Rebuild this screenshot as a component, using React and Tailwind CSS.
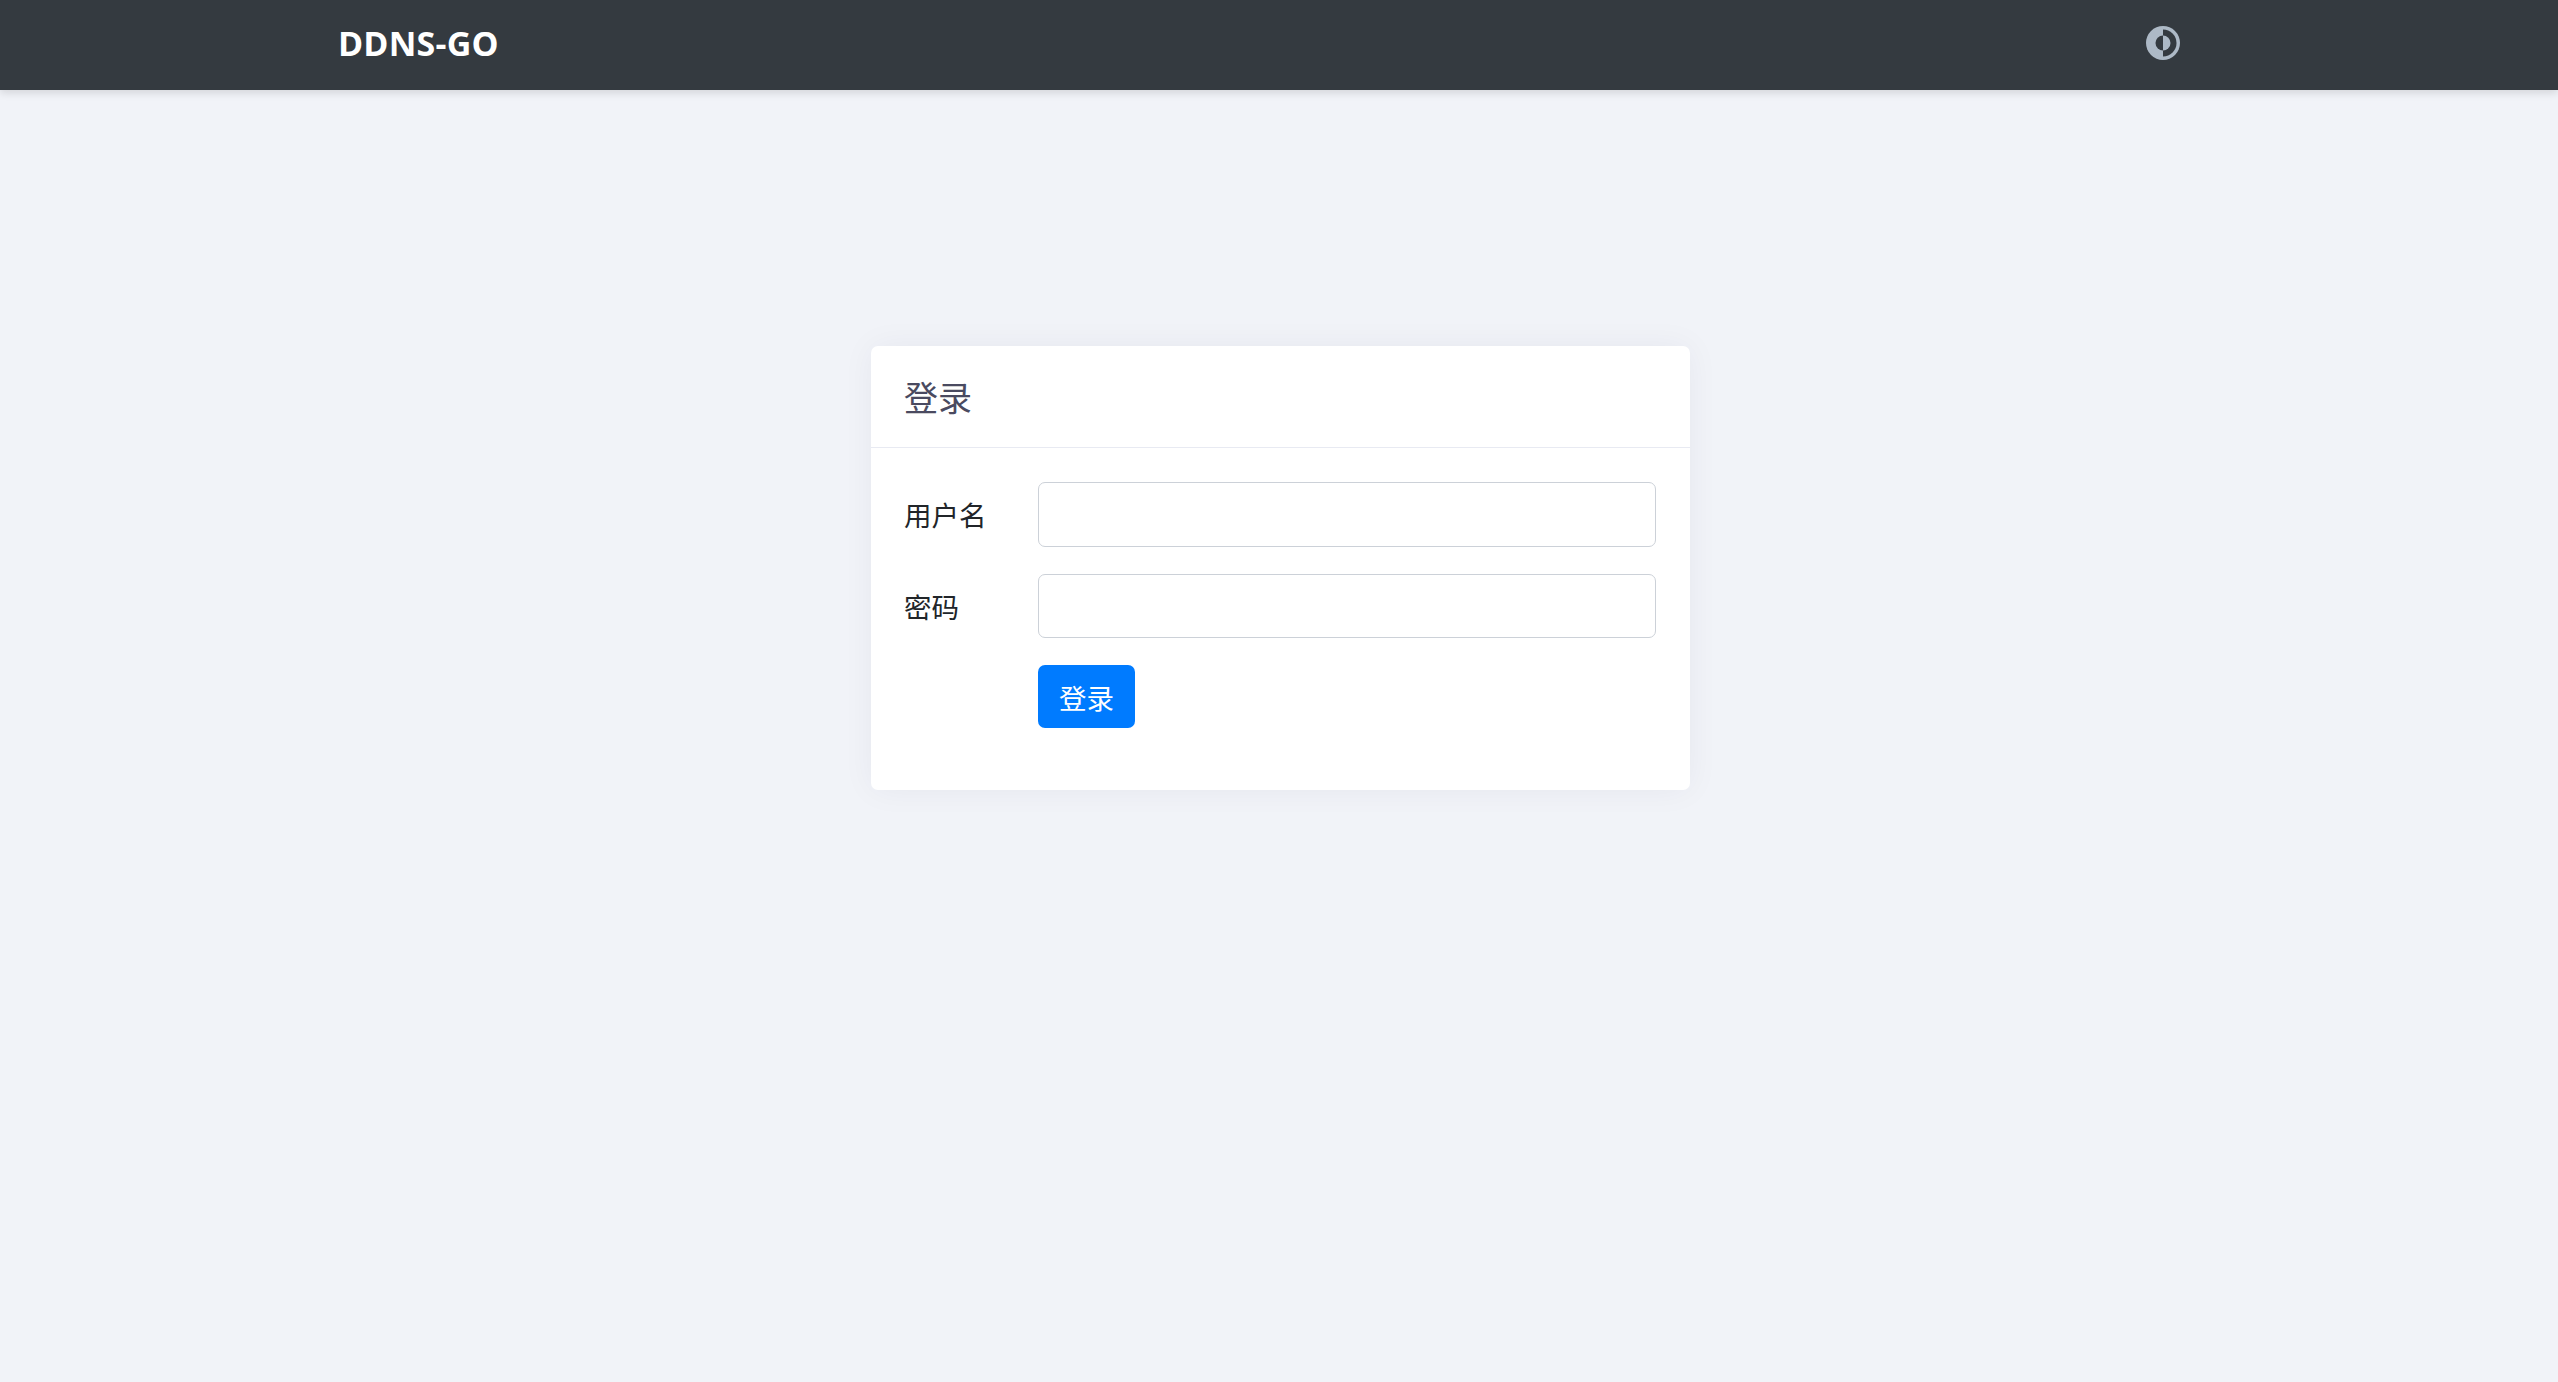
const cjk = '"Noto Sans CJK SC", "Noto Sans", sans-serif';

function ThemeIcon() {
  return (
    <svg className="w-[34px] h-[34px] -mt-[4px]" viewBox="0 0 34 34">
      <circle cx="17" cy="17" r="17" fill="#adb9c6" />
      <path d="M17 3.5a13.5 13.5 0 0 1 0 27z" fill="#343a40" />
      <path d="M17 9.5a7.5 7.5 0 0 1 0 15z" fill="#adb9c6" />
      <path d="M17 9.5a7.5 7.5 0 0 0 0 15z" fill="#343a40" />
    </svg>
  );
}

export default function App() {
  return (
    <div className="min-h-[1382px] bg-[#f1f3f8]" style={{ fontFamily: cjk }}>
      <nav className="h-[90px] bg-[#343a40] shadow-[0_3px_8px_rgba(0,0,0,0.12)] flex items-center justify-between pl-[338px] pr-[378px]">
        <span className="text-white font-bold text-[34px] font-['Open_Sans'] leading-none pb-1 tracking-[0.2px]">DDNS-GO</span>
        <ThemeIcon />
      </nav>

      <div className="pt-[256px] pl-[871px]">
        <div className="w-[819px] h-[444px] bg-white rounded-[7px] shadow-[0_0_32px_rgba(40,40,80,0.05)]">
          <div className="h-[102px] border-b border-[#e8eaf2] px-[33px] flex items-center text-[34px] text-[#4a4a60]">
            登录
          </div>
          <form className="pt-[34px] pl-[33px] pr-[34px] flex flex-col gap-[27px]">
            <div className="flex items-center">
              <label className="w-[134px] text-[27.5px] text-[#212529]">用户名</label>
              <input className="flex-1 h-[65px] bg-white border-[1.5px] border-[#ccd1d8] rounded-[7px] outline-none" />
            </div>
            <div className="flex items-center">
              <label className="w-[134px] pt-[2px] text-[27.5px] text-[#212529]">密码</label>
              <input className="flex-1 h-[64px] bg-white border-[1.5px] border-[#ccd1d8] rounded-[7px] outline-none" />
            </div>
            <div className="pl-[134px]">
              <button type="button" className="w-[97px] h-[63px] pt-[2px] bg-[#007bff] rounded-[7px] text-white text-[27.5px]">
                登录
              </button>
            </div>
          </form>
        </div>
      </div>
    </div>
  );
}
